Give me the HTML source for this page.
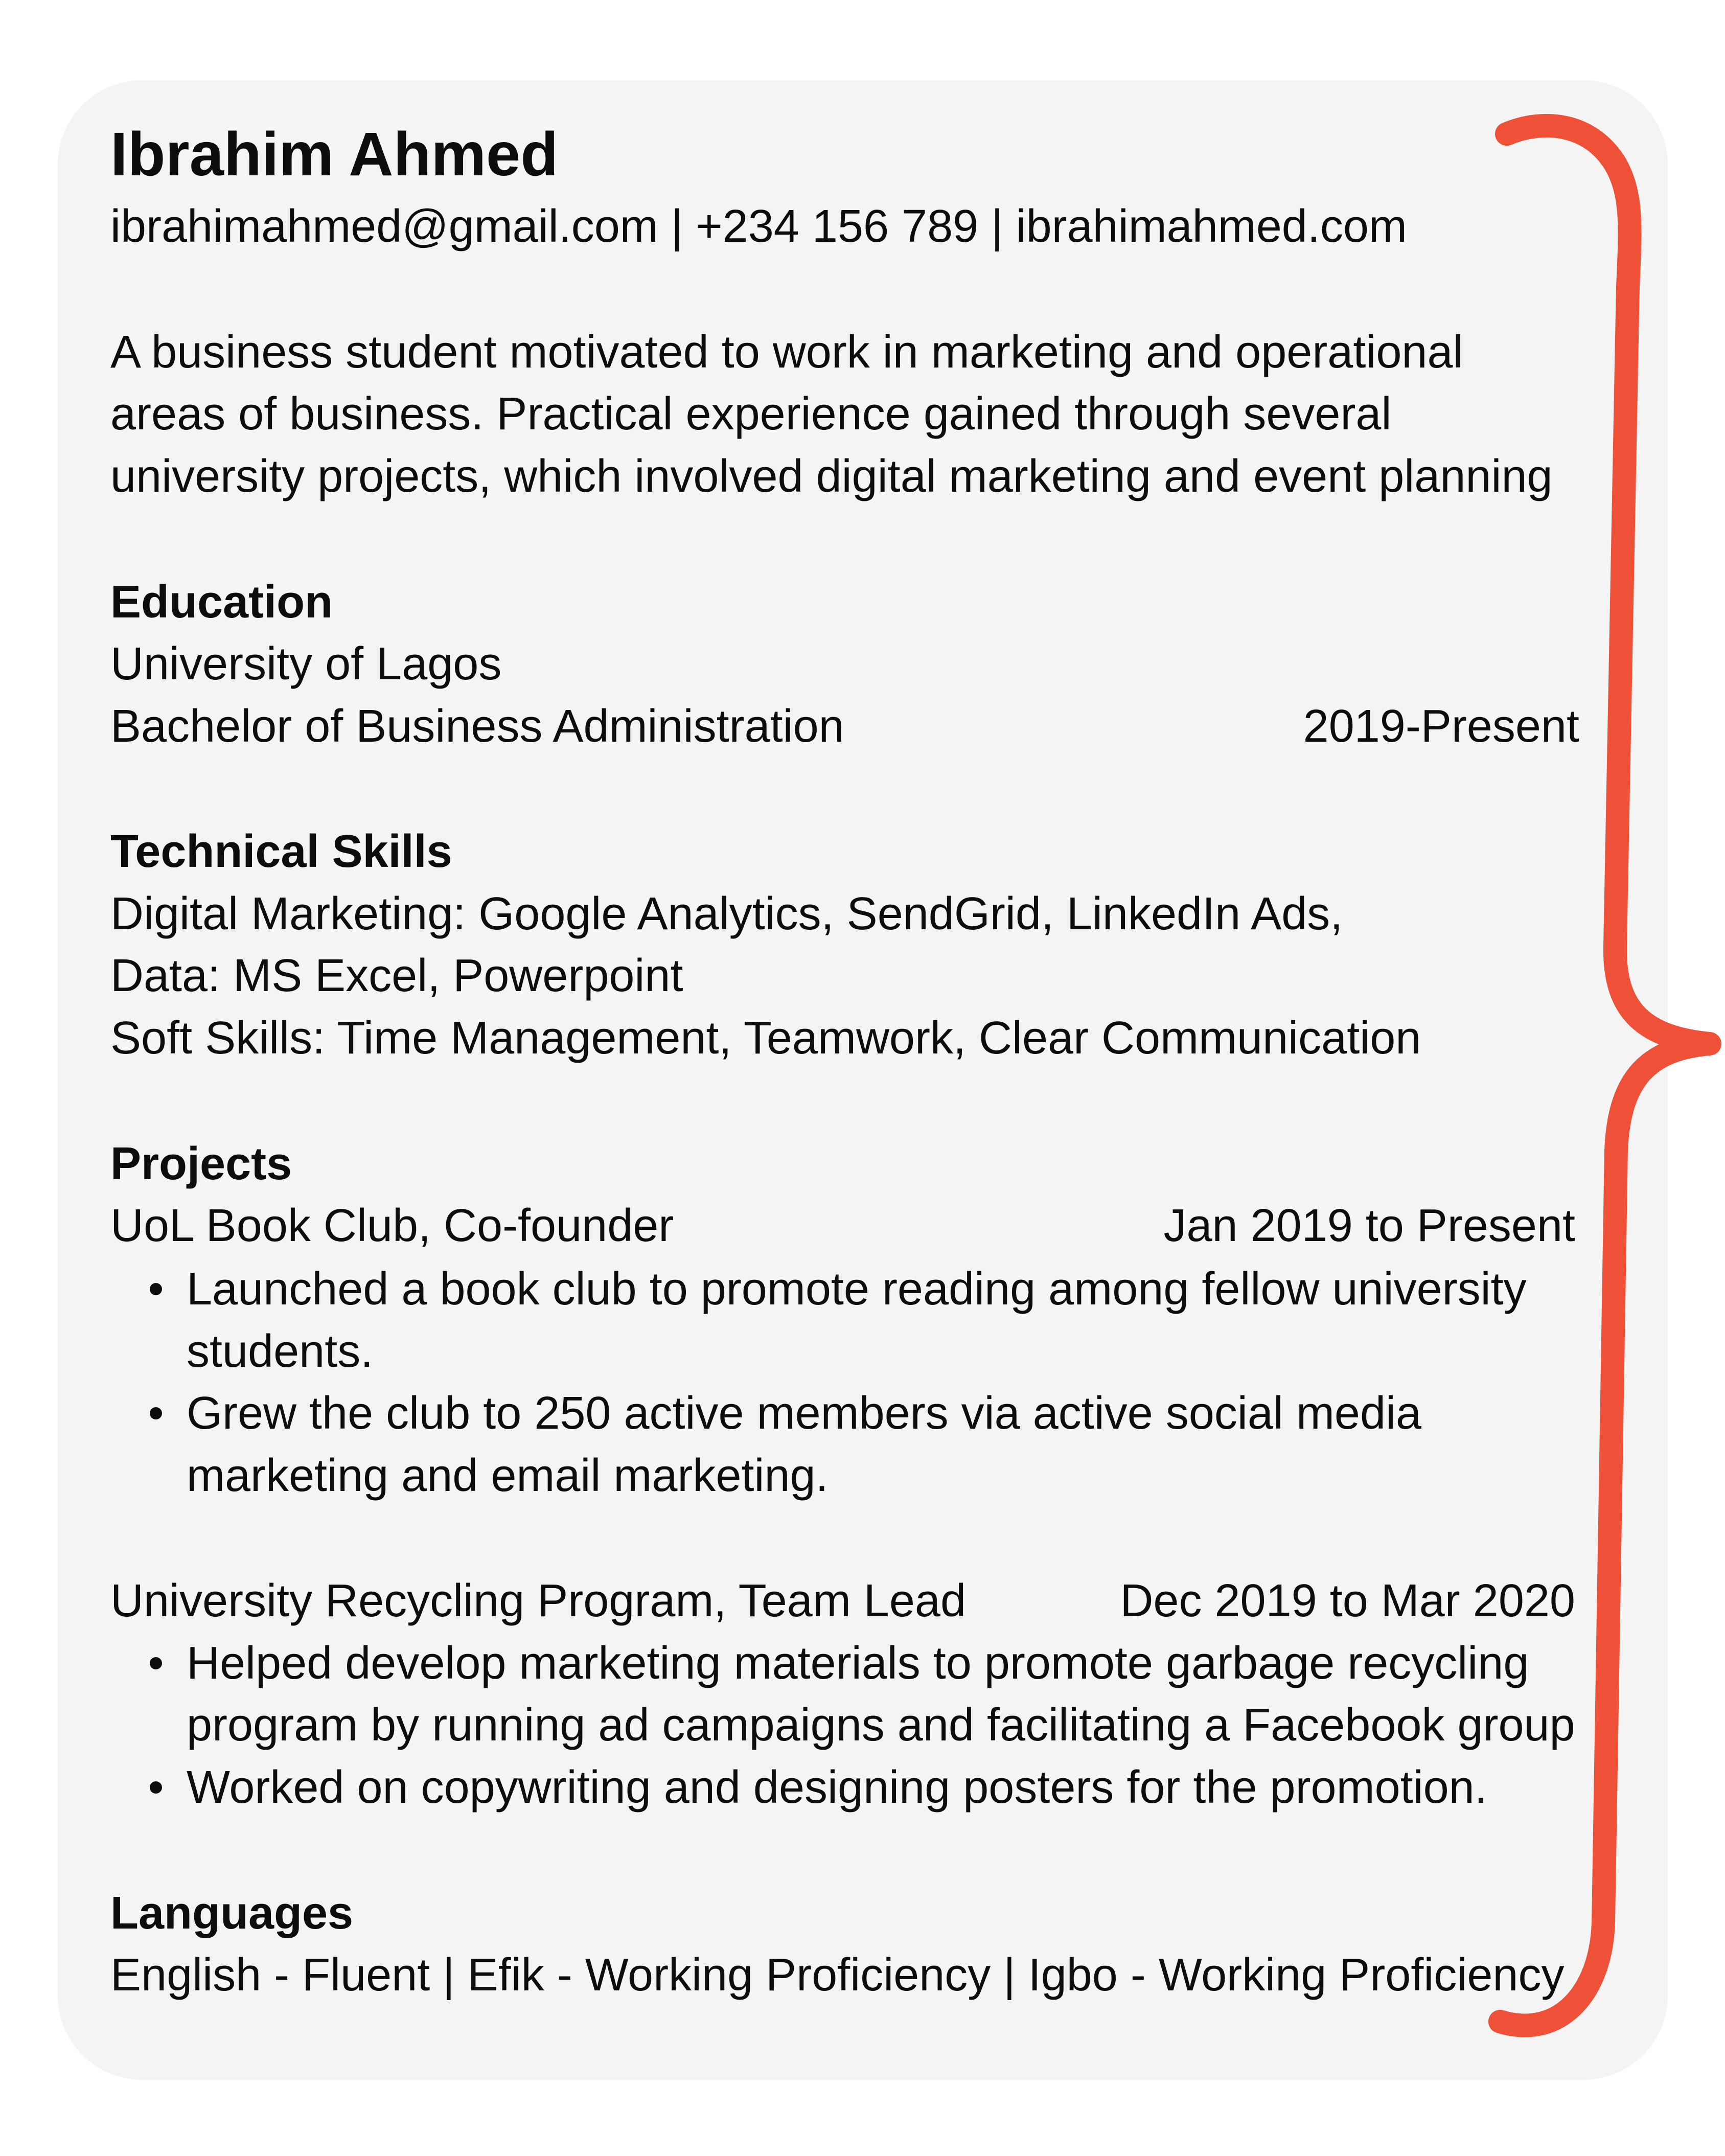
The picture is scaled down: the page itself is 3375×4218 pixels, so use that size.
<!DOCTYPE html>
<html><head><meta charset="utf-8"><style>
html,body{margin:0;padding:0;background:#fff;}
body{width:3375px;height:4218px;position:relative;overflow:hidden;font-family:"Liberation Sans",sans-serif;color:#0d0d0d;}
.card{position:absolute;left:113px;top:157px;width:3150px;height:3912px;background:#f4f4f4;border-radius:165px;}
.clip{position:absolute;left:0;top:-5px;width:3135px;height:4218px;overflow:hidden;}
.l{position:absolute;left:216px;white-space:nowrap;font-size:90px;line-height:122px;height:122px;}
.b{font-weight:bold;}
.r{position:absolute;white-space:nowrap;font-size:90px;line-height:122px;text-align:right;}
.dot{position:absolute;left:293px;width:24px;height:24px;border-radius:50%;background:#0d0d0d;}
</style></head><body>
<div class="card"></div>
<div class="clip">
<div class="l b" style="top:236px;font-size:121px;line-height:140px;">Ibrahim Ahmed</div>
<div class="l" style="top:387px;">ibrahimahmed@gmail.com | +234 156 789 | ibrahimahmed.com</div>
<div class="l" style="top:633px;">A business student motivated to work in marketing and operational</div>
<div class="l" style="top:754px;">areas of business. Practical experience gained through several</div>
<div class="l" style="top:876px;">university projects, which involved digital marketing and event planning</div>
<div class="l b" style="top:1122px;">Education</div>
<div class="l" style="top:1243px;">University of Lagos</div>
<div class="l" style="top:1365px;">Bachelor of Business Administration</div>
<div class="r" style="top:1365px;right:45px;">2019-Present</div>
<div class="l b" style="top:1610px;">Technical Skills</div>
<div class="l" style="top:1732px;">Digital Marketing: Google Analytics, SendGrid, LinkedIn Ads,</div>
<div class="l" style="top:1853px;">Data: MS Excel, Powerpoint</div>
<div class="l" style="top:1975px;">Soft Skills: Time Management, Teamwork, Clear Communication</div>
<div class="l b" style="top:2221px;">Projects</div>
<div class="l" style="top:2342px;">UoL Book Club, Co-founder</div>
<div class="r" style="top:2342px;right:53px;">Jan 2019 to Present</div>
<div class="dot" style="top:2515px;"></div>
<div class="l" style="left:365px;top:2466px;">Launched a book club to promote reading among fellow university</div>
<div class="l" style="left:365px;top:2588px;">students.</div>
<div class="dot" style="top:2758px;"></div>
<div class="l" style="left:365px;top:2709px;">Grew the club to 250 active members via active social media</div>
<div class="l" style="left:365px;top:2831px;">marketing and email marketing.</div>
<div class="l" style="top:3076px;">University Recycling Program, Team Lead</div>
<div class="r" style="top:3076px;right:53px;">Dec 2019 to Mar 2020</div>
<div class="dot" style="top:3247px;"></div>
<div class="l" style="left:365px;top:3198px;">Helped develop marketing materials to promote garbage recycling</div>
<div class="l" style="left:365px;top:3319px;">program by running ad campaigns and facilitating a Facebook group</div>
<div class="dot" style="top:3490px;"></div>
<div class="l" style="left:365px;top:3441px;">Worked on copywriting and designing posters for the promotion.</div>
<div class="l b" style="top:3687px;">Languages</div>
<div class="l" style="top:3808px;">English - Fluent | Efik - Working Proficiency | Igbo - Working Proficiency</div>
</div>
<svg width="3375" height="4218" style="position:absolute;left:0;top:0">
<path d="M2948,262 C3020,232 3110,240 3160,320 C3195,380 3190,450 3185,560 L3160,1850 C3157,1980 3220,2030 3345,2042 C3225,2052 3168,2110 3162,2250 L3137,3760 C3133,3900 3050,3990 2935,3955" fill="none" stroke="#ee5038" stroke-width="46" stroke-linecap="round" stroke-linejoin="round"/>
</svg>
</body></html>
